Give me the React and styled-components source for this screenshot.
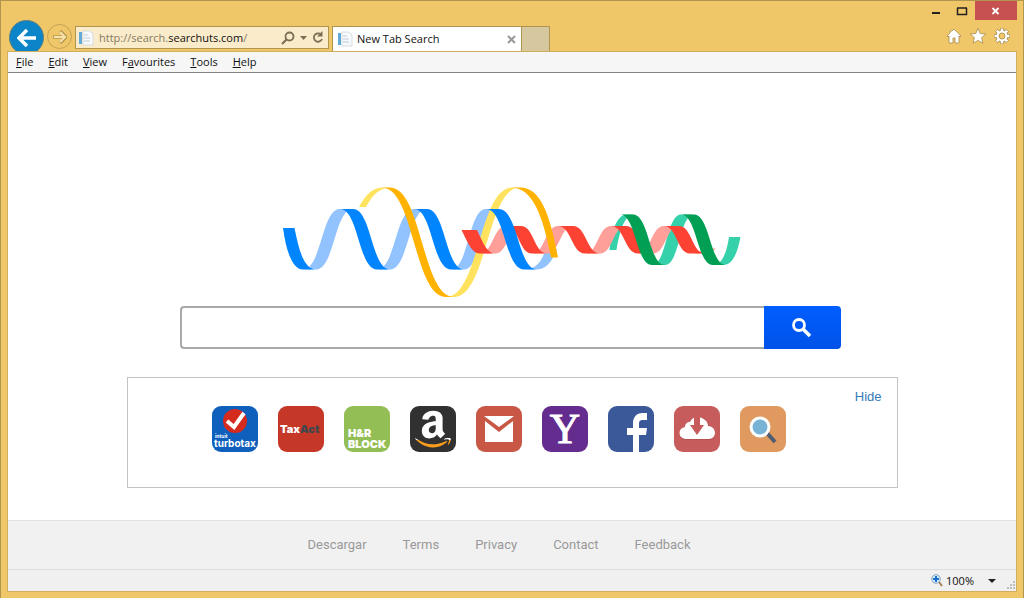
import React from 'react';
import styled, { createGlobalStyle, css } from 'styled-components';
import { FaAmazon } from 'react-icons/fa';

const colors = {
  chrome: '#efc769',
  chromeDark: '#b0954f',
  chromeLine: '#cfae5e',
  address: '#faebca',
  back: '#0b84c8',
  close: '#c75050',
  link: '#337ab7',
  footer: '#f1f1f1',
  footerText: '#999',
};

const MENU = [
  ['', 'F', 'ile'],
  ['', 'E', 'dit'],
  ['', 'V', 'iew'],
  ['F', 'a', 'vourites'],
  ['', 'T', 'ools'],
  ['', 'H', 'elp'],
];

const FOOTER_LINKS = ['Descargar', 'Terms', 'Privacy', 'Contact', 'Feedback'];

// one half turn of a ribbon, between a crest and a trough
const band = (x1, y1, x2, y2, w) => {
  const k = (x2 - x1) * 0.5;
  return `M${x1} ${y1}C${x1 + k} ${y1} ${x2 - k} ${y2} ${x2} ${y2}h${w}` +
    `C${x2 + w - k} ${y2} ${x1 + w + k} ${y1} ${x1 + w} ${y1}z`;
};

const bands = (list, y1, y2, w) => list.map(([a, b]) => band(a, y1, b, y2, w)).join('');

const Logo = () => (
  <LogoArt viewBox="280 184 464 116" role="img" aria-label="Search">
    <path fill="#92c3ff" d={bands([[303, 340], [377, 414], [451, 486]], 269.5, 209, 13)} />
    <path fill="#92c3ff" d="M524 269.5C538 269.5 542 259 546 249H557C552 262 546 269.5 536 269.5z" />
    <path fill="#ffe25e" d="M359 207C366 194 373 187.5 383 187.5H390C380 188 373 194 366 207z" />
    <path fill="#ffe25e" d={band(446, 297, 512, 187.5, 8)} />
    <path fill="#34d1ab" d="M609.5 250C612 230 617 214.5 627 214.5H634C624 216 620 230 616.5 250z" />
    <path fill="#34d1ab" d={band(652, 265, 681, 214.5, 13)} />
    <path fill="#34d1ab" d="M713 265C723 265 727 250 729 237H740.5C737 255 732 265 723 265z" />
    <path fill="#ff9f99" d={bands([[480, 506], [532, 558], [585, 611], [638, 664]], 253.5, 226, 15)} />
    <path fill="#ff9f99" d="M694 253.5H705Q711 253 716 248.5H707z" />
    <path fill="#fb4233" d="M461.5 230H477C482 240 485 250 493 253.5H480C471 253.5 467 240 461.5 230z" />
    <path fill="#fb4233" d={bands([[506, 532], [558, 585], [611, 638], [664, 690]], 226, 253.5, 15)} />
    <path fill="#0085ff" d="M283 228H294.5C299 250 303 266 314 269.5H303C292 269.5 286 250 283 228z" />
    <path fill="#0085ff" d={bands([[340, 377], [414, 451], [486, 524]], 209, 269.5, 13)} />
    <path fill="#ffb300" d={band(382, 187.5, 446, 297, 8)} />
    <path fill="#ffb300" d="M512 187.5H520C541 187.5 550 215 558 257.5H551C543 215 532 188 512 187.5z" />
    <path fill="#009f54" d={bands([[620, 652], [681, 713]], 214.5, 265, 13)} />
  </LogoArt>
);

const PageIcon = () => (
  <svg width="16" height="16" viewBox="0 0 16 16" aria-hidden="true">
    <path d="M5 1h7l3 3v11H5z" fill="#f7fafc" stroke="#d5dce0" />
    <path d="M1 2h3v12H1z" fill="#63a9d8" />
    <path d="M6 5h4M6 8h6M6 11h6" stroke="#c0cdd8" />
  </svg>
);

const TileText = styled.text`
  font: 700 ${p => p.$size}px Inter, "Open Sans", sans-serif;
  font-weight: ${p => (p.$heavy ? 900 : 700)};
  fill: #fff;
`;

const YahooText = styled.text`
  font: 400 42px "Liberation Serif", serif;
  fill: #fff;
  stroke: #fff;
  text-anchor: middle;
`;

const tiles = [
  {
    name: 'TurboTax',
    color: '#0f5fbd',
    art: (
      <>
        <circle cx="23" cy="15" r="12" fill="#d52b1e" />
        <path d="M15 15l7 6 10-14" fill="none" stroke="#fff" strokeWidth="4" />
        <TileText x="3" y="32" $size={5}>intuit</TileText>
        <TileText x="2" y="41" $size={10}>turbotax</TileText>
      </>
    ),
  },
  {
    name: 'TaxAct',
    color: '#c53727',
    art: (
      <TileText x="2" y="27" $size={11} $heavy>Tax<tspan fill="#42464e">Act</tspan></TileText>
    ),
  },
  {
    name: 'H&R Block',
    color: '#93be55',
    art: (
      <>
        <TileText x="4" y="31" $size={11} $heavy>H&amp;R</TileText>
        <TileText x="4" y="42" $size={11} $heavy>BLOCK</TileText>
      </>
    ),
  },
  {
    name: 'Amazon',
    color: '#313131',
    art: (
      <>
        <clipPath id="letter"><path d="M0 0h46v34H0z" /></clipPath>
        <clipPath id="smile"><path d="M0 34h46v12H0z" /></clipPath>
        <g clipPath="url(#letter)"><FaAmazon x="2" y="2" size={42} color="#fff" /></g>
        <g clipPath="url(#smile)"><FaAmazon x="2" y="2" size={42} color="#f79c1d" /></g>
      </>
    ),
  },
  {
    name: 'Gmail',
    color: '#c85845',
    art: <path d="M8 10h30L23 21zM9 15l14 11 14-11v21H9z" fill="#fff" />,
  },
  {
    name: 'Yahoo',
    color: '#642c8f',
    art: <YahooText x="23" y="37">Y</YahooText>,
  },
  {
    name: 'Facebook',
    color: '#3b5998',
    art: (
      <path
        d="M25 46V29h-6v-7h6v-5c0-6 4-10 9-10h5v7h-4c-3 0-4 1-4 4v4h8l-1 7h-7v17z"
        fill="#fff"
      />
    ),
  },
  {
    name: 'Downloads',
    color: '#c75c5c',
    art: (
      <>
        <path d="M12 34a6 6 0 0 1-1-12c0-3 2-5 5-5 1-4 4-6 8-6 6 0 10 3 11 9 4 1 6 3 6 7s-3 7-6 7z" fill="#a94b4b" opacity=".6" />
        <path d="M12 33a6 6 0 0 1-1-12c0-3 2-5 5-5 1-3 4-5 7-5s6 1 8 3c2 1 3 4 3 6 4 0 7 3 7 7 0 3-3 6-6 6z" fill="#fff" />
        <path d="M20 10h6v9h4l-7 10-7-10h4z" fill="#c75c5c" />
      </>
    ),
  },
  {
    name: 'Search tools',
    color: '#e0995e',
    art: (
      <>
        <path d="M27 27l8 9" stroke="#4f5d73" strokeWidth="4" />
        <circle cx="20" cy="21" r="9" fill="#76b3d5" stroke="#fff" strokeWidth="3" />
      </>
    ),
  },
];

export default class App extends React.Component {

  constructor(props) {
    super(props);
    this.state = { query: '', hidden: false };
    this.toggle = this.toggle.bind(this);
  }

  toggle(e) {
    e.preventDefault();
    this.setState({ hidden: !this.state.hidden });
  }

  render() {
    const { query, hidden } = this.state;
    return (
      <>
        <GlobalStyle />
        <Frame>
          <TitleBar>
            <CaptionButton aria-label="Minimise">
              <svg width="10" height="10"><path d="M1 6h8v2H1z" fill="#222" /></svg>
            </CaptionButton>
            <CaptionButton aria-label="Maximise">
              <svg width="12" height="10"><path d="M1 2h10M1.5 2v6.5h9V2" fill="none" stroke="#222" strokeWidth="1.5" /></svg>
            </CaptionButton>
            <CaptionButton $close aria-label="Close">
              <svg width="10" height="10"><path d="M1.5 2l6 6M7.5 2l-6 6" stroke="#fff" strokeWidth="1.8" /></svg>
            </CaptionButton>
          </TitleBar>
          <Toolbar>
            <BackButton aria-label="Back">
              <svg width="20" height="20" viewBox="0 0 20 20">
                <path d="M19 10H3M10 2L2 10l8 8" fill="none" stroke="#fff" strokeWidth="3.5" />
              </svg>
            </BackButton>
            <ForwardButton aria-label="Forward">
              <svg width="14" height="14" viewBox="0 0 14 14">
                <path d="M0 7h12M7 1l6 6-6 6" fill="none" stroke="#b89a50" strokeWidth="3.5" />
                <path d="M1 7h11M7 2l5 5-5 5" fill="none" stroke="#f8e2ab" strokeWidth="2" />
              </svg>
            </ForwardButton>
            <AddressBar>
              <PageIcon />
              <Url>http://search.<b>searchuts.com</b>/</Url>
              <PlainButton aria-label="Search">
                <svg width="14" height="14" viewBox="0 0 14 14">
                  <circle cx="8.5" cy="5.5" r="4" fill="none" stroke="#7a6e55" strokeWidth="1.8" />
                  <path d="M5.5 8.5L1 13" stroke="#7a6e55" strokeWidth="2.2" />
                </svg>
              </PlainButton>
              <PlainButton aria-label="Address history">
                <svg width="7" height="4"><path d="M0 0h7L3.5 4z" fill="#7a6e55" /></svg>
              </PlainButton>
              <PlainButton aria-label="Refresh">
                <svg width="12" height="13" viewBox="0 0 12 13">
                  <path d="M9 3.5A4.200 4.200 0 1 0 10 8" fill="none" stroke="#7a6e55" strokeWidth="1.8" />
                  <path d="M10.5 0v5.5H5z" fill="#7a6e55" />
                </svg>
              </PlainButton>
            </AddressBar>
            <Tab>
              <PageIcon />
              <span>New Tab Search</span>
              <PlainButton aria-label="Close tab">
                <svg width="9" height="9"><path d="M1 1l7 7M8 1L1 8" stroke="#999" strokeWidth="2" /></svg>
              </PlainButton>
            </Tab>
            <NewTab aria-label="New tab" />
            <Commands>
              <PlainButton aria-label="Home">
                <svg width="16" height="16" viewBox="0 0 16 16">
                  <path d="M8 1l7 7-1 1-1-1v7H9v-5H7v5H3V8L2 9 1 8l3-3V3h2z" fill="#fff" stroke="#a88d4b" strokeWidth=".8" />
                </svg>
              </PlainButton>
              <PlainButton aria-label="Favourites">
                <svg width="16" height="16" viewBox="0 0 16 16">
                  <path d="M8 .3l2.200 5.200 5.600.5-4.200 3.700 1.300 5.600L8 12.400l-4.900 2.900 1.300-5.600L.2 6l5.600-.5z" fill="#fff" stroke="#a88d4b" strokeWidth=".8" />
                </svg>
              </PlainButton>
              <PlainButton aria-label="Tools">
                <svg width="16" height="16" viewBox="0 0 16 16">
                  <g stroke="#a88d4b" fill="none">
                    <path d="M8 0v16M0 8h16M2.300 2.300l11.400 11.400M13.700 2.300L2.300 13.700" strokeWidth="3.8" />
                    <circle cx="8" cy="8" r="4.5" strokeWidth="3.5" />
                  </g>
                  <path d="M8 .5v15M.5 8h15M2.700 2.700l10.600 10.600M13.300 2.700L2.700 13.300" stroke="#fff" strokeWidth="2.4" />
                  <circle cx="8" cy="8" r="4.3" fill={colors.chrome} stroke="#fff" strokeWidth="2.2" />
                  <circle cx="8" cy="8" r="3" fill="none" stroke="#a88d4b" strokeWidth=".8" />
                </svg>
              </PlainButton>
            </Commands>
          </Toolbar>
          <Body>
            <MenuBar>
              {MENU.map(([pre, key, rest]) => (
                <button key={key}>{pre}<u>{key}</u>{rest}</button>
              ))}
            </MenuBar>
            <Page>
              <Logo />
              <SearchForm onSubmit={e => e.preventDefault()}>
                <input
                  type="text"
                  aria-label="Search the web"
                  value={query}
                  onChange={e => this.setState({ query: e.target.value })}
                />
                <button aria-label="Search">
                  <svg width="20" height="20" viewBox="0 0 20 20">
                    <circle cx="7" cy="7" r="5.5" fill="none" stroke="#fff" strokeWidth="2.8" />
                    <path d="M11 11l7 7" stroke="#fff" strokeWidth="3.5" />
                  </svg>
                </button>
              </SearchForm>
              <Shortcuts>
                <HideLink href="#hide" onClick={this.toggle}>{hidden ? 'Show' : 'Hide'}</HideLink>
                {!hidden && (
                  <Tiles>
                    {tiles.map(t => (
                      <Tile key={t.name} href="#open" aria-label={t.name} $color={t.color}>
                        <svg width="46" height="46" viewBox="0 0 46 46">{t.art}</svg>
                      </Tile>
                    ))}
                  </Tiles>
                )}
              </Shortcuts>
            </Page>
            <Footer>
              {FOOTER_LINKS.map(l => <a key={l} href="#footer">{l}</a>)}
            </Footer>
            <StatusBar>
              <ZoomButton>
                <svg width="12" height="13" viewBox="0 0 12 13">
                  <path d="M8 8l3 4" stroke="#a77f50" strokeWidth="2" />
                  <circle cx="5" cy="5" r="4.3" fill="#d5ebfa" stroke="#8aa5bb" />
                  <path d="M5 2v6M2 5h6" stroke="#1670d0" strokeWidth="2" />
                </svg>
                100%
              </ZoomButton>
              <PlainButton aria-label="Change zoom level">
                <svg width="8" height="4"><path d="M0 0h8L4 4z" fill="#222" /></svg>
              </PlainButton>
              <Grip width="10" height="10" viewBox="0 0 10 10" aria-hidden="true">
                <path d="M7 0h2v2H7zM7 3h2v2H7zM7 6h2v2H7zM4 3h2v2H4zM4 6h2v2H4zM1 6h2v2H1z" fill="#bdbdbd" />
              </Grip>
            </StatusBar>
          </Body>
        </Frame>
      </>
    );
  }

}

const GlobalStyle = createGlobalStyle`
  * {
    box-sizing: border-box;
  }

  body {
    margin: 0;
    font: 11px/16px "Open Sans", "Noto Sans", sans-serif;
    color: #111;
  }

  button {
    padding: 0;
    border: 0;
    background: none;
    font: inherit;
    color: inherit;
  }

  svg {
    display: block;
    flex: none;
  }
`;

const Frame = styled.div`
  display: flex;
  flex-direction: column;
  min-height: 100vh;
  padding: 0 6px 6px;
  border: 1px solid ${colors.chromeDark};
  background: ${colors.chrome};
`;

const TitleBar = styled.div`
  display: flex;
  justify-content: flex-end;
  height: 19px;
`;

const CaptionButton = styled.button`
  display: flex;
  align-items: center;
  justify-content: center;
  width: 26px;
  height: 19px;

  ${p => p.$close && css`
    width: 42px;
    background: ${colors.close};
  `}
`;

const Toolbar = styled.div`
  display: flex;
  align-items: flex-end;
  height: 31px;
  padding-left: 2px;
  overflow: hidden;
`;

const BackButton = styled.button`
  display: flex;
  align-items: center;
  justify-content: center;
  align-self: flex-start;
  flex: none;
  width: 35px;
  height: 35px;
  border: 1px solid #5d7f80;
  border-radius: 50%;
  background: ${colors.back};
`;

const ForwardButton = styled.button`
  display: flex;
  align-items: center;
  justify-content: center;
  flex: none;
  width: 25px;
  height: 25px;
  margin: 0 3px 2px;
  border: 1px solid #c4a255;
  border-radius: 50%;
`;

const AddressBar = styled.div`
  display: flex;
  align-items: center;
  gap: 5px;
  flex: 0 1 254px;
  height: 23px;
  margin: 0 3px 2px 0;
  padding: 0 4px 0 2px;
  border: 1px solid ${colors.chromeDark};
  background: ${colors.address};
`;

const Url = styled.span`
  flex: 1;
  color: #857a62;
  white-space: nowrap;

  b {
    font-weight: 400;
    color: #111;
  }
`;

const PlainButton = styled.button`
  display: flex;
  align-items: center;
`;

const Tab = styled.div`
  display: flex;
  align-items: center;
  gap: 4px;
  width: 190px;
  height: 25px;
  padding: 0 5px 0 4px;
  border: 1px solid ${colors.chromeDark};
  border-bottom: 0;
  background: #fff;

  span {
    flex: 1;
  }
`;

const NewTab = styled.button`
  width: 28px;
  height: 25px;
  border: 1px solid ${colors.chromeDark};
  border-width: 1px 1px 0 0;
  background: #d7c79e;
`;

const Commands = styled.div`
  display: flex;
  gap: 8px;
  margin-left: auto;
  padding: 0 7px 7px 0;
`;

const Body = styled.div`
  display: flex;
  flex-direction: column;
  flex: 1;
  border: 1px solid ${colors.chromeLine};
  background: #fff;
`;

const MenuBar = styled.nav`
  display: flex;
  gap: 15px;
  height: 21px;
  padding: 2px 8px;
  border-bottom: 1px solid #858585;
  background: #f6f6f6;
`;

const Page = styled.main`
  display: flex;
  flex-direction: column;
  align-items: center;
  flex: 1;
  padding: 111px 16px 32px;
`;

const LogoArt = styled.svg`
  width: 464px;
  max-width: 100%;
`;

const SearchForm = styled.form`
  display: flex;
  width: 100%;
  max-width: 661px;
  margin: 6px 4px 28px 0;

  input {
    flex: 1;
    height: 43px;
    padding: 0 12px;
    border: 2px solid #a9a9a9;
    border-right: 0;
    border-radius: 4px 0 0 4px;
    font: 16px "Liberation Sans", sans-serif;
  }

  button {
    display: flex;
    align-items: center;
    justify-content: center;
    width: 77px;
    border-radius: 0 4px 4px 0;
    background: linear-gradient(#005eff, #0052e8);
  }
`;

const Shortcuts = styled.section`
  display: flex;
  flex-direction: column;
  width: 100%;
  max-width: 771px;
  min-height: 111px;
  padding: 11px 15px;
  border: 1px solid #c3c3c3;
`;

const HideLink = styled.a`
  align-self: flex-end;
  font: 13px/16px "Liberation Sans", Arial, sans-serif;
  color: ${colors.link};
  text-decoration: none;
`;

const Tiles = styled.div`
  display: flex;
  justify-content: center;
  flex-wrap: wrap;
  gap: 20px;
  padding: 1px 26px 0 0;
`;

const Tile = styled.a`
  width: 46px;
  height: 46px;
  border-radius: 9px;
  background: ${p => p.$color};
  overflow: hidden;
`;

const Footer = styled.footer`
  display: flex;
  justify-content: center;
  gap: 36px;
  padding: 16px 26px 16px 0;
  border-top: 1px solid #e2e2e2;
  background: ${colors.footer};

  a {
    font: 13px/16px Roboto, sans-serif;
    color: ${colors.footerText};
    text-decoration: none;
  }
`;

const StatusBar = styled.div`
  display: flex;
  align-items: center;
  justify-content: flex-end;
  gap: 10px;
  height: 22px;
  border-top: 1px solid #dcdcdc;
  background: #f0f0f0;
`;

const ZoomButton = styled.button`
  display: flex;
  align-items: center;
  gap: 3px;
  margin-right: 4px;
`;

const Grip = styled.svg`
  align-self: flex-end;
`;
